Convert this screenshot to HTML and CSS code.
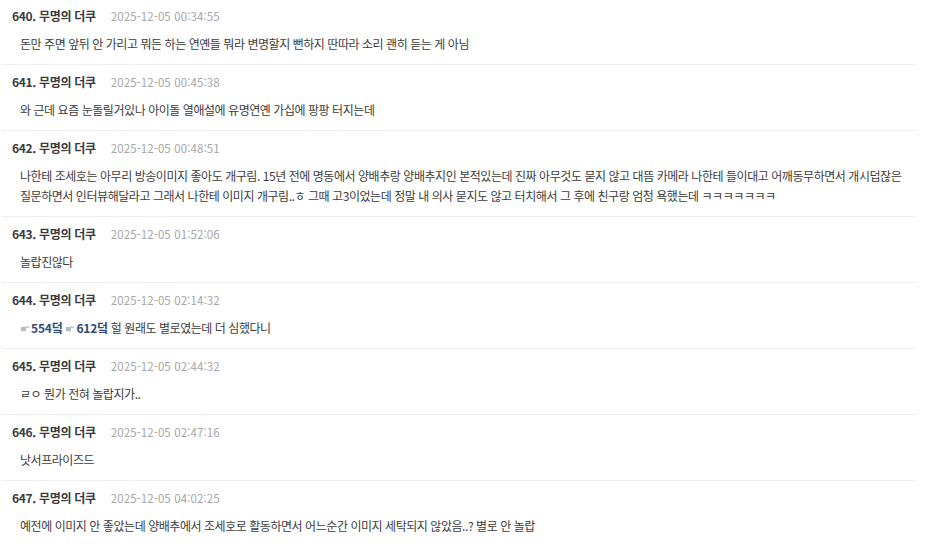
FILE: index.html
```html
<!DOCTYPE html>
<html lang="ko">
<head>
<meta charset="utf-8">
<link rel="stylesheet" href="styles.css">
</head>
<body>
<div class="list">
  <div class="item">
    <div class="head"><span class="name">640. 무명의 더쿠</span><span class="date">2025-12-05 00:34:55</span></div>
    <div class="body">돈만 주면 앞뒤 안 가리고 뭐든 하는 연옌들 뭐라 변명할지 뻔하지 딴따라 소리 괜히 듣는 게 아님</div>
  </div>
  <div class="item">
    <div class="head"><span class="name">641. 무명의 더쿠</span><span class="date">2025-12-05 00:45:38</span></div>
    <div class="body">와 근데 요즘 눈돌릴거있나 아이돌 열애설에 유명연옌 가십에 팡팡 터지는데</div>
  </div>
  <div class="item">
    <div class="head"><span class="name">642. 무명의 더쿠</span><span class="date">2025-12-05 00:48:51</span></div>
    <div class="body">나한테 조세호는 아무리 방송이미지 좋아도 개구림. 15년 전에 명동에서 양배추랑 양배추지인 본적있는데 진짜 아무것도 묻지 않고 대뜸 카메라 나한테 들이대고 어깨동무하면서 개시덥잖은 질문하면서 인터뷰해달라고 그래서 나한테 이미지 개구림..ㅎ 그때 고3이었는데 정말 내 의사 묻지도 않고 터치해서 그 후에 친구랑 엄청 욕했는데 ㅋㅋㅋㅋㅋㅋㅋ</div>
  </div>
  <div class="item">
    <div class="head"><span class="name">643. 무명의 더쿠</span><span class="date">2025-12-05 01:52:06</span></div>
    <div class="body">놀랍진않다</div>
  </div>
  <div class="item">
    <div class="head"><span class="name">644. 무명의 더쿠</span><span class="date">2025-12-05 02:14:32</span></div>
    <div class="body"><a class="ref"><svg class="hand" viewBox="0 0 12 8" width="10" height="7"><path d="M1 2.2 H5.5 L6.2 1.6 H11.2 Q12 2.3 11.2 3 H7.2 V6.6 Q7.2 7.4 6.4 7.4 H2.2 Q1 7.4 1 6.2 Z" fill="#b3bac8"/></svg>554덬</a> <a class="ref"><svg class="hand" viewBox="0 0 12 8" width="10" height="7"><path d="M1 2.2 H5.5 L6.2 1.6 H11.2 Q12 2.3 11.2 3 H7.2 V6.6 Q7.2 7.4 6.4 7.4 H2.2 Q1 7.4 1 6.2 Z" fill="#b3bac8"/></svg>612덬</a> 헐 원래도 별로였는데 더 심했다니</div>
  </div>
  <div class="item">
    <div class="head"><span class="name">645. 무명의 더쿠</span><span class="date">2025-12-05 02:44:32</span></div>
    <div class="body">ㄹㅇ 뭔가 전혀 놀랍지가..</div>
  </div>
  <div class="item">
    <div class="head"><span class="name">646. 무명의 더쿠</span><span class="date">2025-12-05 02:47:16</span></div>
    <div class="body">낫서프라이즈드</div>
  </div>
  <div class="item">
    <div class="head"><span class="name">647. 무명의 더쿠</span><span class="date">2025-12-05 04:02:25</span></div>
    <div class="body">예전에 이미지 안 좋았는데 양배추에서 조세호로 활동하면서 어느순간 이미지 세탁되지 않았음..? 별로 안 놀랍</div>
  </div>
</div>
</body>
</html>
```

FILE: styles.css
```css
html, body {
  margin: 0;
  padding: 0;
  background: #ffffff;
}
body {
  font-family: "Noto Sans CJK KR", "Noto Sans", sans-serif;
  color: #333333;
}
.list {
  display: flex;
  flex-direction: column;
  padding: 0 8px 0 2px;
  margin-top: -1px;
}
.item {
  padding: 8px 0 10px 10px;
  border-bottom: 1px solid #eeeeee;
  display: flex;
  flex-direction: column;
  gap: 9px;
}
.head {
  display: flex;
  align-items: baseline;
  gap: 15px;
  line-height: 18px;
}
.name {
  font-size: 12px;
  font-weight: 700;
  color: #3a3a3a;
  letter-spacing: -0.3px;
}
.date {
  font-size: 11.5px;
  color: #a6a6a6;
  letter-spacing: 0.1px;
}
.body {
  padding-left: 8px;
  padding-right: 8px;
  font-size: 12px;
  line-height: 20px;
  letter-spacing: -0.45px;
  color: #3c3c3c;
  word-break: keep-all;
}
.ref {
  color: #2f4a78;
  font-weight: 700;
  letter-spacing: -0.2px;
}
.hand {
  display: inline-block;
  vertical-align: 1px;
  margin-right: 1px;
}
```
